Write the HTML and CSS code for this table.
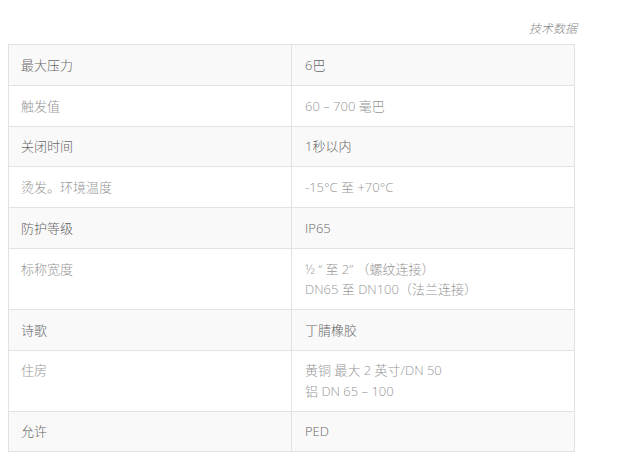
FILE: index.html
```html
<!DOCTYPE html>
<html lang="zh">
<head>
<meta charset="utf-8">
<title>技术数据</title>
<link rel="stylesheet" href="styles.css">
</head>
<body>
<table class="spec">
  <caption class="spec-caption">技术数据</caption>
  <tbody>
    <tr class="odd"><td class="key">最大压力</td><td class="val">6巴</td></tr>
    <tr class="even"><td class="key">触发值</td><td class="val">60 – 700 毫巴</td></tr>
    <tr class="odd"><td class="key">关闭时间</td><td class="val">1秒以内</td></tr>
    <tr class="even"><td class="key">烫发。环境温度</td><td class="val">-15°C 至 +70°C</td></tr>
    <tr class="odd"><td class="key">防护等级</td><td class="val">IP65</td></tr>
    <tr class="even"><td class="key">标称宽度</td><td class="val">½ “ 至 2” （螺纹连接）<br>DN65 至 DN100（法兰连接）</td></tr>
    <tr class="odd"><td class="key">诗歌</td><td class="val">丁腈橡胶</td></tr>
    <tr class="even"><td class="key">住房</td><td class="val">黄铜 最大 2 英寸/DN 50<br>铝 DN 65 – 100</td></tr>
    <tr class="odd"><td class="key">允许</td><td class="val">PED</td></tr>
  </tbody>
</table>
</body>
</html>
```
FILE: styles.css
```css
html, body {
  margin: 0;
  padding: 0;
  background: #fff;
}
body {
  padding: 8px;
  font-family: "Open Sans", "Noto Sans CJK SC", sans-serif;
  font-size: 13px;
  font-weight: 300;
  line-height: 20.25px;
}
.spec {
  width: 567px;
  border-collapse: collapse;
  table-layout: fixed;
  border: 1px solid #e2e2e2;
  margin-top: 1px;
}
.spec-caption {
  caption-side: top;
  text-align: right;
  font-style: italic;
  font-size: 12px;
  line-height: 20px;
  color: #888;
  padding: 10px 0 5px;
  margin-right: -2px;
}
.spec td {
  border: 1px solid #e2e2e2;
  padding: 9.75px 12px;
  vertical-align: top;
}
.spec .key {
  width: 258px;
}
.spec .val {
  padding-left: 13px;
}
.odd {
  background: #f9f9f9;
  color: #666;
}
.even {
  background: #fff;
  color: #959595;
}
```
